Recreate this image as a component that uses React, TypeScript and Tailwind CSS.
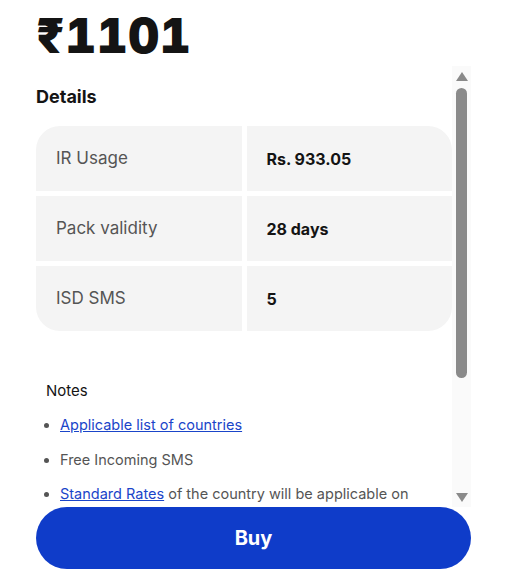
import React from "react"

const rows = [
  { label: "IR Usage", value: "Rs. 933.05" },
  { label: "Pack validity", value: "28 days" },
  { label: "ISD SMS", value: "5" },
]

function FakeScrollbar() {
  return (
    <div className="flex w-[19px] shrink-0 flex-col items-center bg-[#fafafa] pt-[6px] pb-[5px]">
      <svg width="12" height="9" viewBox="0 0 12 9" className="shrink-0">
        <path d="M6 0 L12 9 L0 9 Z" fill="#8a8a8a" />
      </svg>
      <div className="mt-[7px] h-[290px] w-[11px] rounded-full bg-[#8a8a8a]" />
      <div className="flex-1" />
      <svg width="12" height="9" viewBox="0 0 12 9" className="shrink-0">
        <path d="M0 0 L12 0 L6 9 Z" fill="#8a8a8a" />
      </svg>
    </div>
  )
}

export default function App() {
  return (
    <div className="min-h-screen bg-white font-['Inter',sans-serif] text-[#141414]">
      <div className="mx-[36px] w-[435px] pt-[12px]">
        <h1 className="text-[48px] font-black leading-[48px] tracking-[0.6px] tabular-nums">₹1101</h1>

        <div className="mt-[6px] flex h-[441px]">
          <div className="flex-1 overflow-hidden">
            <h2 className="pt-[17px] text-[18px] font-bold leading-7">Details</h2>

            <div className="mt-[15px] flex flex-col gap-[5px] overflow-hidden rounded-[24px]">
              {rows.map((r) => (
                <div key={r.label} className="grid grid-cols-2 gap-[5px]">
                  <div className="flex h-[65px] items-center bg-[#f4f4f4] px-[20px] text-[17px] text-[#555555]">
                    {r.label}
                  </div>
                  <div className="flex h-[65px] items-center bg-[#f4f4f4] px-[20px] text-[16px] font-bold">
                    {r.value}
                  </div>
                </div>
              ))}
            </div>

            <div className="px-[10px] pt-[48px]">
              <p className="text-[15px] leading-6">Notes</p>
              <ul className="mt-[10px] list-disc pl-[14px] text-[14.5px] leading-6 text-[#555555] marker:text-[#555555]">
                <li className="mb-[11px]">
                  <a href="#" className="text-[#1a45c9] underline">Applicable list of countries</a>
                </li>
                <li className="mb-[10px]">Free Incoming SMS</li>
                <li className="mb-[11px]">
                  <a href="#" className="text-[#1a45c9] underline">Standard Rates</a> of the country will be applicable on
                  outgoing calls and data usage beyond the pack
                </li>
              </ul>
            </div>
          </div>
          <FakeScrollbar />
        </div>

        <button className="flex h-[62px] w-full items-center justify-center rounded-full bg-[#0f3cc9] text-[20px] font-bold text-white">
          Buy
        </button>
      </div>
    </div>
  )
}
